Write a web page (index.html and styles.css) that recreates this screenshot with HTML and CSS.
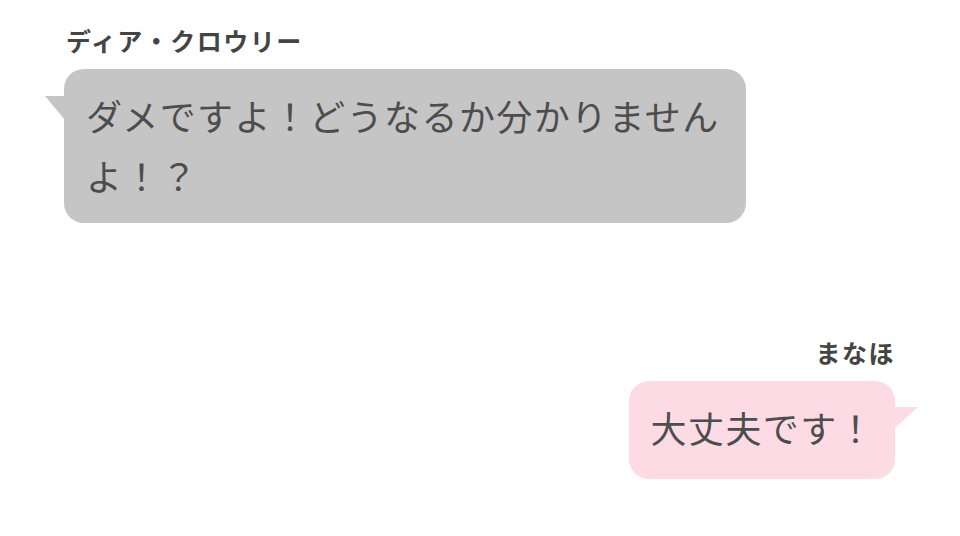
FILE: index.html
```html
<!DOCTYPE html>
<html lang="ja">
<head>
    <meta charset="UTF-8">
    <meta name="viewport" content="width=device-width, initial-scale=1.0">
    <title>トーク</title>
    <link rel="stylesheet" href="styles.css">
</head>
<body>
    <div class="chat">
        <div class="message left">
            <div class="name">ディア・クロウリー</div>
            <div class="bubble gray">ダメですよ！どうなるか分かりませんよ！？</div>
        </div>
        <div class="message right">
            <div class="name">まなほ</div>
            <div class="bubble pink">大丈夫です！</div>
        </div>
    </div>
</body>
</html>
```

FILE: styles.css
```css
body {
    margin: 0;
    padding: 0;
    background-color: #ffffff;
    font-family: "Noto Sans CJK JP", "Noto Sans", sans-serif;
    color: #4d4d4d;
}
.chat {
    display: flex;
    flex-direction: column;
    gap: 112px;
    padding: 23px 0 0 0;
}
.message {
    display: flex;
    flex-direction: column;
    gap: 11px;
}
.message.left {
    align-items: flex-start;
    padding-left: 64px;
}
.message.right {
    align-items: flex-end;
    padding-right: 65px;
}
.name {
    font-size: 25px;
    line-height: 35px;
    font-weight: bold;
    color: #444;
    letter-spacing: 1.5px;
    padding-left: 2px;
}
.bubble {
    position: relative;
    font-size: 36px;
    line-height: 60px;
    letter-spacing: 1.4px;
    border-radius: 20px;
    box-sizing: border-box;
    padding: 16px 20px 18px 22px;
}
.bubble::before {
    content: "";
    position: absolute;
}
.gray {
    width: 682px;
    background-color: #c5c5c5;
}
.gray::before {
    left: -19px;
    top: 27px;
    width: 20px;
    height: 24px;
    background-color: #c5c5c5;
    clip-path: polygon(0 0, 100% 0, 100% 100%);
}
.pink {
    background-color: #fddbe5;
    padding-bottom: 22px;
}
.pink::before {
    right: -23px;
    top: 26px;
    width: 24px;
    height: 22px;
    background-color: #fddbe5;
    clip-path: polygon(0 0, 100% 0, 0 100%);
}
```
